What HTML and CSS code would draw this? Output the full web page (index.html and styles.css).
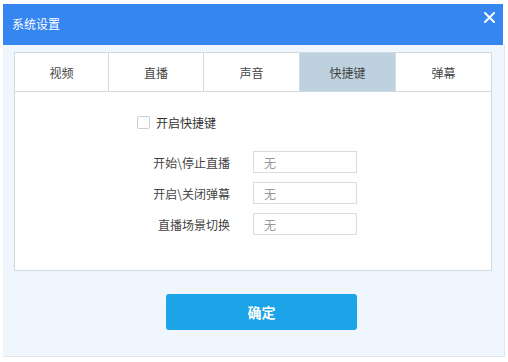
FILE: index.html
```html
<!DOCTYPE html>
<html lang="zh-CN">
<head>
  <meta charset="UTF-8">
  <title>系统设置</title>
  <link rel="stylesheet" href="styles.css">
</head>
<body>

  <div class="dialog">
    <div class="dialog-header">
      <span class="dialog-title">系统设置</span>
      <span class="close-btn">
        <svg width="11" height="11" viewBox="0 0 11 11">
          <path d="M1 1 L10 10 M10 1 L1 10" stroke="#fff" stroke-width="2" stroke-linecap="round"/>
        </svg>
      </span>
    </div>

    <div class="dialog-body">
      <div class="panel">
        <div class="tabs">
          <div class="tab">视频</div>
          <div class="tab">直播</div>
          <div class="tab">声音</div>
          <div class="tab active">快捷键</div>
          <div class="tab">弹幕</div>
        </div>

        <div class="hotkeys">
          <label class="check-row">
            <span class="checkbox"></span>
            <span>开启快捷键</span>
          </label>

          <div class="key-row">
            <span class="key-label">开始\停止直播</span>
            <input type="text" placeholder="无">
          </div>
          <div class="key-row">
            <span class="key-label">开启\关闭弹幕</span>
            <input type="text" placeholder="无">
          </div>
          <div class="key-row">
            <span class="key-label">直播场景切换</span>
            <input type="text" placeholder="无">
          </div>
        </div>
      </div>

      <div class="footer">
        <button class="ok-btn">确定</button>
      </div>
    </div>
  </div>

</body>
</html>
```

FILE: styles.css
```css
* {
  margin: 0;
  padding: 0;
  box-sizing: border-box;
  font-family: "Noto Sans CJK SC", "Liberation Sans", sans-serif;
}

body {
  background-color: #fff;
  color: #444;
  font-size: 12px;
  padding: 4px 0 0 3px;
}

.dialog {
  width: 502px;
}

.dialog-header {
  height: 41px;
  width: 500px;
  background-color: #3586f1;
  color: #fff;
  display: flex;
  align-items: center;
  justify-content: space-between;
  padding: 0 8px 0 9px;
}

.dialog-title {
  font-size: 12px;
  margin-top: -2px;
}

.close-btn {
  align-self: flex-start;
  margin-top: 8px;
  line-height: 0;
}

.dialog-body {
  background-color: #eff6fd;
  height: 312px;
  padding: 7px 12px 0 11px;
  border-right: 1px solid #dfe6ee;
  border-bottom: 1px solid #dfe6ee;
}

.panel {
  background-color: #fff;
  border: 1px solid #d2dae1;
  height: 219px;
}

.tabs {
  display: grid;
  grid-template-columns: 94px 95px 96px 96px 1fr;
  border-bottom: 1px solid #d2dae1;
}

.tab {
  height: 38px;
  display: flex;
  align-items: center;
  justify-content: center;
  border-right: 1px solid #d2dae1;
  color: #444;
}

.tab:last-child {
  border-right: none;
}

.tab.active {
  background-color: #bdd1de;
}

.hotkeys {
  padding: 24px 0 0 115px;
}

.check-row {
  display: flex;
  align-items: center;
  gap: 6px;
  margin-left: 7px;
  height: 13px;
  margin-bottom: 22px;
  color: #333;
}

.checkbox {
  width: 13px;
  height: 13px;
  border: 1px solid #c9ced3;
  border-radius: 2px;
  background: #fff;
}

.key-row {
  display: flex;
  align-items: center;
  gap: 23px;
  margin-bottom: 9px;
}

.key-label {
  width: 100px;
  text-align: right;
  color: #444;
}

.key-row input {
  width: 104px;
  height: 22px;
  border: 1px solid #d8dde2;
  padding: 0 10px;
  font-size: 12px;
  color: #444;
  background: #fff;
  outline: none;
}

.key-row input::placeholder {
  color: #999;
}

.footer {
  padding: 23px 0 0 152px;
}

.ok-btn {
  width: 191px;
  height: 36px;
  background-color: #1ca4e8;
  color: #fff;
  border: none;
  border-radius: 3px;
  font-size: 14px;
  font-weight: bold;
  cursor: pointer;
}
```
